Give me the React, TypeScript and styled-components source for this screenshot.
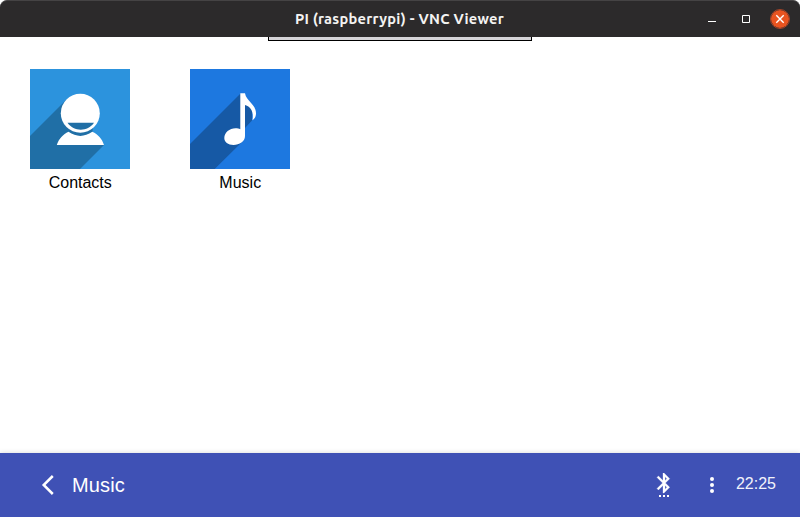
import React from 'react';
import styled, { createGlobalStyle } from 'styled-components';

const GlobalStyle = createGlobalStyle`
  * { box-sizing: border-box; }
  body { margin: 0; background: #fff; }
`;

const Window = styled.div`
  width: 800px;
  height: 517px;
  display: flex;
  flex-direction: column;
  overflow: hidden;
  background: #fff;
  font-family: 'Liberation Sans', Arial, sans-serif;
`;

const TitleBar = styled.header`
  height: 37px;
  flex: none;
  display: grid;
  grid-template-columns: 1fr auto 1fr;
  align-items: center;
  background: #2c2a2b;
  border-top: 1px solid #454344;
  border-radius: 7px 7px 0 0;
  padding: 0 10px;
`;

const Title = styled.h1`
  grid-column: 2;
  margin: 0;
  padding-right: 1px;
  color: #f4f3f2;
  font: bold 14.667px/20px Ubuntu, 'Noto Sans', sans-serif;
  letter-spacing: 0.25px;
  white-space: nowrap;
`;

const WindowControls = styled.div`
  display: flex;
  justify-content: flex-end;
  align-items: center;
  gap: 14px;
`;

const ControlButton = styled.button<{ $accent?: boolean }>`
  width: 20px;
  height: 20px;
  padding: 0;
  border: ${(p) => (p.$accent ? '1px solid #a64427' : '0')};
  border-radius: 50%;
  background: ${(p) => (p.$accent ? '#e95420' : 'transparent')};
  background-clip: padding-box;
  svg { display: block; }
`;

const Screen = styled.main`
  flex: 1;
  display: flex;
  flex-direction: column;
`;

const ViewerHandle = styled.div`
  width: 264px;
  height: 4px;
  margin-left: 268px;
  background: #d6d4d8;
  border: 1px solid #000;
  border-top: 0;
`;

const AppGrid = styled.div`
  display: flex;
  gap: 60px;
  padding: 28px 30px 0;
`;

const AppTile = styled.div`
  width: 100px;
  display: flex;
  flex-direction: column;
  align-items: center;
  svg { display: block; }
`;

const AppLabel = styled.span`
  margin-top: 4px;
  padding-left: 0.5px;
  font-size: 16px;
  line-height: 19px;
  color: #000;
`;

const BottomBar = styled.footer`
  height: 64px;
  flex: none;
  display: flex;
  align-items: center;
  padding: 0 24px 0 36px;
  background: #3f51b5;
  color: #fff;
  box-shadow: 0 0 5px rgba(0, 0, 0, 0.16);
  svg { display: block; flex: none; }
`;

const ScreenName = styled.span`
  flex: 1;
  margin-left: 12px;
  font-size: 20px;
  line-height: 24px;
  letter-spacing: 0.15px;
`;

const StatusIcons = styled.div`
  display: flex;
  align-items: center;
  gap: 24px;
`;

const Clock = styled.time`
  margin: 0 0 3px 12px;
  font-size: 16px;
  line-height: 20px;
  color: #f2f3fb;
`;

const ContactsIcon = () => (
  <svg width="100" height="100" viewBox="0 0 100 100">
    <path fill="#2c93dd" d="M0 0h100v100H0z" />
    <path fill="#206fa6" d="M0 67 37 30 63 56 62.500 63 74 76 50 100H0z" />
    <path fill="#fff" d="M26.8 76C29 69.5 33 65.5 38.5 62.8Q50.3 71 62.3 62.8C68 65.5 72 69.5 74 76Z" />
    <circle cx="50.3" cy="44.3" r="19.5" fill="#fff" />
    <path fill="#206fa6" d="M37.5 53.7H64C57.5 63 44 63 37.5 53.7Z" />
  </svg>
);

const MusicIcon = () => (
  <svg width="100" height="100" viewBox="0 0 100 100">
    <path fill="#1d78e0" d="M0 0h100v100H0z" />
    <path fill="#1659a5" d="M0 75 50.5 24.5 62 37V51.5L55 59 53 72 24.700 100H0z" />
    <path
      fill="#fff"
      d="M50.3 24.3H55C56 32 66 35 66 44.5 66 47.5 64.7 50 62.5 51.3 64.2 43 60.5 37.5 55 36V67C55 72.5 49.5 76 43.5 76 38 76 34.3 73 34.3 69 34.3 63.5 39.5 59.2 45.5 59.2 47.5 59.2 49 59.6 50.3 60.2Z"
    />
  </svg>
);

const App = () => (
  <>
    <GlobalStyle />
    <Window>
      <TitleBar>
        <Title>PI (raspberrypi) - VNC Viewer</Title>
        <WindowControls>
          <ControlButton aria-label="Minimize">
            <svg width="20" height="20"><path fill="#fff" d="M6 12h8v1H6z" /></svg>
          </ControlButton>
          <ControlButton aria-label="Maximize">
            <svg width="20" height="20"><path fill="none" stroke="#fff" d="M6.500 6.500h7v7h-7z" /></svg>
          </ControlButton>
          <ControlButton $accent aria-label="Close">
            <svg width="18" height="18"><path stroke="#fff" strokeWidth="1.4" d="m5.300 5.300 7.400 7.400m0-7.400-7.400 7.400" /></svg>
          </ControlButton>
        </WindowControls>
      </TitleBar>
      <Screen>
        <ViewerHandle />
        <AppGrid>
          <AppTile>
            <ContactsIcon />
            <AppLabel>Contacts</AppLabel>
          </AppTile>
          <AppTile>
            <MusicIcon />
            <AppLabel>Music</AppLabel>
          </AppTile>
        </AppGrid>
      </Screen>
      <BottomBar>
        <svg width="24" height="24" fill="none" stroke="#fff" strokeWidth="2.500">
          <path d="M16.800 3 7.700 12l9.100 9" />
        </svg>
        <ScreenName>Music</ScreenName>
        <StatusIcons>
          <svg width="24" height="24" fill="#fff" stroke="#fff" strokeWidth="0.300">
            <path d="M17.71 5.710 12 0h-1v7.590L6.410 3 5 4.410 10.590 10 5 15.590 6.410 17 11 12.410V20h1l5.710-5.710-4.300-4.290zM13 3.830l1.880 1.880L13 7.590zM14.880 14.290 13 16.170v-3.760z" />
            <path stroke="none" d="M7 22h2v2H7zM11 22h2v2h-2zM15 22h2v2h-2z" />
          </svg>
          <svg width="24" height="24" fill="#fff">
            <circle cx="12" cy="6" r="2" />
            <circle cx="12" cy="12" r="2" />
            <circle cx="12" cy="18" r="2" />
          </svg>
        </StatusIcons>
        <Clock>22:25</Clock>
      </BottomBar>
    </Window>
  </>
);

export default App;
